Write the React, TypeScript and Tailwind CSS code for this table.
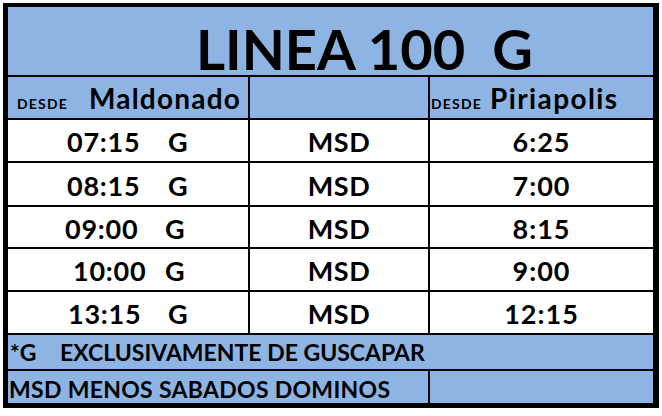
import React from "react";

const rows = [
  { t: "07:15", pl: "pl-[59px]", w: "w-[101px]", r: "6:25" },
  { t: "08:15", pl: "pl-[59px]", w: "w-[101px]", r: "7:00" },
  { t: "09:00", pl: "pl-[57px]", w: "w-[100px]", r: "8:15" },
  { t: "10:00", pl: "pl-[65px]", w: "w-[92px]", r: "9:00" },
  { t: "13:15", pl: "pl-[60px]", w: "w-[100px]", r: "12:15" },
];

export default function App() {
  return (
    <div className="min-h-[416px] bg-white pt-[3px] font-['Lato',sans-serif] font-bold text-black">
      <div className="ml-[3px] w-[656px] bg-black pl-[5px] pt-[4px] pr-[6px] pb-[5px]">
        <div className="grid grid-cols-[240px_178px_223px] grid-rows-[68px_41px_41px_42px_40px_41px_41px_34px_32px] gap-[2px]">
          <div className="col-span-3 flex items-end bg-[#8db4e2] pl-[188px]">
            <span className="whitespace-pre text-[56px] leading-[52px]">LINEA 100  G</span>
          </div>

          <div className="flex items-center bg-[#8db4e2] pl-[9px]">
            <div className="flex items-baseline leading-none">
              <span className="w-[72px] shrink-0 text-[14px] tracking-[1.2px]">DESDE</span>
              <span className="text-[28px] tracking-[1.2px]">Maldonado</span>
            </div>
          </div>
          <div className="bg-[#8db4e2]" />
          <div className="flex items-center bg-[#8db4e2] pl-[1px]">
            <div className="flex items-baseline leading-none">
              <span className="w-[59px] shrink-0 text-[14px] tracking-[1.2px]">DESDE</span>
              <span className="text-[28px] tracking-[1.4px]">Piriapolis</span>
            </div>
          </div>

          {rows.map((row) => (
            <React.Fragment key={row.t}>
              <div className={`flex items-center bg-white pt-[2px] text-[27px] leading-none tracking-[0.75px] ${row.pl}`}>
                <span className={`${row.w} shrink-0`}>{row.t}</span>
                <span>G</span>
              </div>
              <div className="flex items-center justify-center bg-white pt-[2px] text-[27px] leading-none tracking-[0.5px]">
                MSD
              </div>
              <div className="flex items-center justify-center bg-white pt-[2px] text-[27px] leading-none tracking-[1px]">
                {row.r}
              </div>
            </React.Fragment>
          ))}

          <div className="col-span-3 flex items-center bg-[#8db4e2] pl-[2px] text-[23px] leading-none">
            <span className="w-[50px] shrink-0">*G</span>
            <span>EXCLUSIVAMENTE DE GUSCAPAR</span>
          </div>

          <div className="col-span-2 flex items-center bg-[#8db4e2] pl-[1px] pt-[5px] text-[23px] leading-none tracking-[0.3px]">
            MSD MENOS SABADOS DOMINOS
          </div>
          <div className="bg-[#8db4e2]" />
        </div>
      </div>
    </div>
  );
}
